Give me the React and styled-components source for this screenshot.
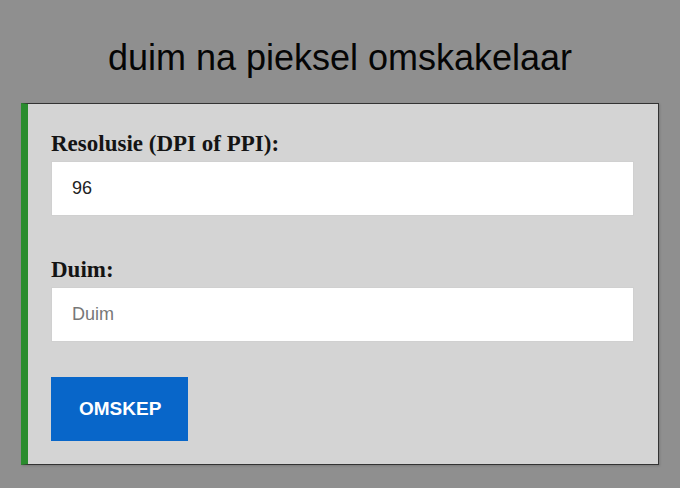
import React from 'react';
import styled, { createGlobalStyle } from 'styled-components';

const GlobalStyle = createGlobalStyle`
  html, body {
    margin: 0;
    padding: 0;
    background: #8f8f8f;
    min-height: 100%;
  }
  * {
    box-sizing: border-box;
  }
`;

const Page = styled.main`
  min-height: 488px;
  padding-top: 37px;
  background: #8f8f8f;
  font-family: "Liberation Sans", Arial, sans-serif;
`;

const Title = styled.h1`
  margin: 0 0 25px;
  font-size: 36px;
  line-height: 41px;
  font-weight: 400;
  color: #050505;
  text-align: center;
`;

const Panel = styled.form`
  margin: 0 21px;
  padding: 27px 24px 23px 23px;
  background: #d4d4d4;
  border: 1px solid #333;
  border-left: 7px solid #2a8c2e;
  box-shadow: 1px 1px 2px rgba(0, 0, 0, 0.15);
`;

const Field = styled.div`
  margin-bottom: ${(p) => (p.$last ? '35px' : '41px')};
`;

const Label = styled.label`
  display: block;
  margin-bottom: 4px;
  font-family: "Liberation Serif", "Times New Roman", serif;
  font-weight: 700;
  font-size: 23px;
  line-height: 26px;
  color: #141414;
`;

const Input = styled.input`
  display: block;
  width: 100%;
  height: 55px;
  padding: 0 20px;
  border: 1px solid #d0d0d0;
  background: #fff;
  font-family: "Liberation Sans", Arial, sans-serif;
  font-size: 18px;
  color: #222;
  outline: none;

  &::placeholder {
    color: #777;
  }
`;

const Button = styled.button`
  display: block;
  height: 64px;
  padding: 0 27px 0 28px;
  border: none;
  background: #0866c9;
  color: #fff;
  font-family: "Liberation Sans", Arial, sans-serif;
  font-size: 19px;
  font-weight: 700;
  cursor: pointer;
`;

export default function App() {
  return (
    <>
      <GlobalStyle />
      <Page>
        <Title>duim na pieksel omskakelaar</Title>
        <Panel onSubmit={(e) => e.preventDefault()}>
          <Field>
            <Label htmlFor="dpi">Resolusie (DPI of PPI):</Label>
            <Input id="dpi" type="text" defaultValue="96" />
          </Field>
          <Field $last>
            <Label htmlFor="duim">Duim:</Label>
            <Input id="duim" type="text" placeholder="Duim" />
          </Field>
          <Button type="submit">OMSKEP</Button>
        </Panel>
      </Page>
    </>
  );
}
